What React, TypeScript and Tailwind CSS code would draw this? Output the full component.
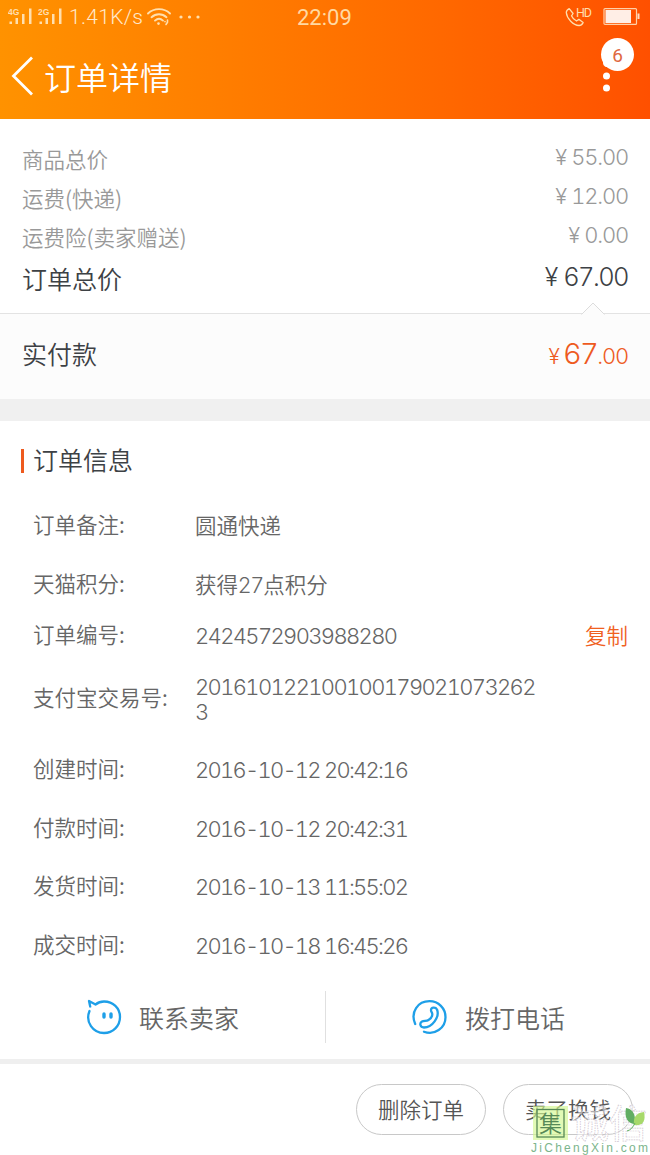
import { clsx } from "clsx";

interface OrderField {
  label: string;
  value: string;
  height: string;
  kind?: "number" | "date";
  copyable?: boolean;
}

const fees = [
  { label: "商品总价", amount: "55.00" },
  { label: "运费(快递)", amount: "12.00" },
  { label: "运费险(卖家赠送)", amount: "0.00" },
];

const fields: OrderField[] = [
  { label: "订单备注:", value: "圆通快递", height: "h-[59px]" },
  { label: "天猫积分:", value: "获得27点积分", height: "h-[58px]" },
  { label: "订单编号:", value: "2424572903988280", height: "h-11", kind: "number", copyable: true },
  { label: "支付宝交易号:", value: "2016101221001001790210732623", height: "h-[83px]", kind: "number" },
  { label: "创建时间:", value: "2016-10-12 20:42:16", height: "h-[59px]", kind: "date" },
  { label: "付款时间:", value: "2016-10-12 20:42:31", height: "h-[58px]", kind: "date" },
  { label: "发货时间:", value: "2016-10-13 11:55:02", height: "h-[59px]", kind: "date" },
  { label: "成交时间:", value: "2016-10-18 16:45:26", height: "h-[59px]", kind: "date" },
];

function Signal({ label }: { label: string }) {
  return (
    <svg width="26" height="18" viewBox="0 0 26 18" fill="#ffdfae">
      <text x="0" y="7" fontSize="8.5" fontWeight="700" fontFamily="Liberation Sans, sans-serif">
        {label}
      </text>
      <rect x="1.5" y="13.5" width="2.5" height="2.5" />
      <rect x="7.5" y="10" width="2.5" height="6" />
      <rect x="14" y="6" width="2.5" height="10" />
      <rect x="21" y="0.5" width="2.5" height="15.5" />
    </svg>
  );
}

function WifiIcon() {
  return (
    <svg width="24" height="18" viewBox="0 0 24 18" fill="none" stroke="#ffdfae" strokeWidth="1.9" strokeLinecap="round">
      <path d="M1 5.5C7-.3 17-.3 23 5.5" />
      <path d="M4.5 9.2C8.8 5.2 15.2 5.2 19.5 9.2" />
      <path d="M8 12.6C10.4 10.4 13.6 10.4 16 12.6" />
      <circle cx="11.5" cy="15.6" r="1.3" fill="#ffdfae" stroke="none" />
      <path d="M18 13.5v.2M20.5 12v2.3L19 16.5" strokeWidth="1.6" />
    </svg>
  );
}

function StatusBar() {
  return (
    <div className="flex h-[33px] items-center font-[Roboto,sans-serif] font-normal text-[#ffd9a3]">
      <div className="flex w-[297px] items-center pl-2">
        <Signal label="4G" />
        <span className="w-1" />
        <Signal label="2G" />
        <span className="ml-[5px] w-[75px] pt-0.5 text-[21px] leading-none font-light tracking-[0.3px] whitespace-nowrap text-[#ffe9cb]">
          1.41K/s
        </span>
        <span className="ml-[3px]">
          <WifiIcon />
        </span>
        <svg className="ml-2" width="22" height="4" fill="#ffdfae">
          <circle cx="2" cy="2" r="1.6" />
          <circle cx="10.5" cy="2" r="1.6" />
          <circle cx="19" cy="2" r="1.6" />
        </svg>
      </div>
      <span className="flex-1 pt-[3px] text-[22px] leading-none">22:09</span>
      <div className="flex items-center pr-[10px]">
        <svg width="30" height="22" viewBox="0 0 30 22" fill="none" stroke="#ffdfae" strokeWidth="1.3" strokeLinejoin="round">
          <path d="M5.2 2.6C4 3.2 2.3 4.8 2.3 6.5c.5 6 7 12.8 12.8 13 1.8 0 3.4-1.7 4-2.9l-4.2-3.3-2.4 1.7c-2-.9-4.2-3.2-5-5.2l1.6-2.3z" />
          <text x="12" y="10.5" fontSize="12.5" fill="#ffdfae" stroke="none" textLength="16" fontFamily="Roboto, sans-serif">
            HD
          </text>
        </svg>
        <svg className="ml-[9px]" width="37" height="17" viewBox="0 0 37 17">
          <rect x="1" y="0.6" width="32.5" height="15.8" rx="1" fill="none" stroke="#ffd0a8" strokeWidth="1.2" />
          <rect x="2.5" y="2" width="25.5" height="13" fill="#ffeee6" />
          <rect x="34.5" y="5.5" width="2" height="5.5" fill="#ffdcc2" />
        </svg>
      </div>
    </div>
  );
}

function Header() {
  return (
    <header className="h-[119px] bg-linear-to-r from-[#ff9200] to-[#ff5000]">
      <StatusBar />
      <div className="flex h-[86px] justify-between text-white">
        <div className="flex h-[86px] items-center pl-[11px]">
          <svg width="24" height="40" viewBox="0 0 24 40" fill="none" stroke="#fff" strokeWidth="2.8">
            <path d="M21 1.5 2.5 20 21 38.5" />
          </svg>
          <h1 className="ml-[9px] text-[32px] leading-none font-[350]">订单详情</h1>
        </div>
        <div className="pt-1 pr-4">
          <svg width="34" height="58" viewBox="0 0 34 58" fill="#fff">
            <circle cx="17.5" cy="17.5" r="16.5" />
            <path d="M3 21v5a4 4 0 0 0 6 3.5z" />
            <circle cx="6.5" cy="39" r="3.5" />
            <circle cx="6.5" cy="51" r="3.5" />
            <text x="17.5" y="25" fontSize="19" fontWeight="400" fill="#e0683f" textAnchor="middle" fontFamily="Roboto, sans-serif">
              6
            </text>
          </svg>
        </div>
      </div>
    </header>
  );
}

function PriceSummary() {
  return (
    <section className="h-[194px] px-[22px] pt-5">
      {fees.map((fee) => (
        <div key={fee.label} className="flex h-[39px] items-center justify-between text-[#999]">
          <span className="text-[21.5px] leading-none">{fee.label}</span>
          <span className="flex items-baseline pb-1 font-[Inter,sans-serif] leading-none tabular-nums">
            <span className="mr-1 text-[22px]">¥</span>
            <span className="text-[22px] tracking-[-1.2px]">{fee.amount}</span>
          </span>
        </div>
      ))}
      <div className="flex h-[43px] items-center justify-between text-[#3d4145]">
        <span className="pt-px text-[25px] leading-none">订单总价</span>
        <span className="flex items-baseline pb-px font-[Inter,sans-serif] leading-none tabular-nums">
          <span className="mr-[5px] text-[25px]">¥</span>
          <span className="text-[25.5px] tracking-[-1.6px]">67.00</span>
        </span>
      </div>
    </section>
  );
}

function PaidTotal() {
  return (
    <section className="relative flex h-[86px] items-center justify-between border-t border-[#e3e3e3] bg-[#fcfcfc] px-[22px]">
      <svg className="absolute -top-3 right-[45px]" width="24" height="13" viewBox="0 0 24 13">
        <path d="M0 13 12 1l12 12z" fill="#fcfcfc" />
        <path d="M.5 12.5 12 1l11.5 11.5" fill="none" stroke="#dcdcdc" />
      </svg>
      <span className="pb-1.5 text-[25px] leading-none text-[#3d4145]">实付款</span>
      <span className="flex items-baseline pb-[7px] font-[Inter,sans-serif] leading-none text-[#ee5a1e] tabular-nums">
        <span className="mr-[3px] text-[21px]">¥</span>
        <span className="text-[29px] tracking-[-1.6px]">67</span>
        <span className="text-[22px] tracking-[-1.2px]">.00</span>
      </span>
    </section>
  );
}

function OrderInfo() {
  return (
    <section className="pt-[27px]">
      <div className="flex h-[26px] items-center pl-[21px]">
        <span className="h-6 w-[3px] bg-[#ee5a1e]" />
        <h2 className="ml-[9px] pb-[3px] text-[25px] leading-none font-[350] text-[#3d4145]">订单信息</h2>
      </div>
      <dl className="pt-[22px] text-[#666]">
        {fields.map((field) => (
          <div key={field.label} className={clsx("flex items-center pr-[22px] pl-[33px]", field.height)}>
            <dt className="w-[162px] shrink-0 pb-[3px] text-[21.5px] leading-none">{field.label}</dt>
            <dd
              className={clsx(
                "w-[346px] leading-[25px] break-all",
                field.kind
                  ? "pt-0.5 font-[Inter,sans-serif] text-[22px] tabular-nums"
                  : "pt-0.5 font-[Inter,'Noto_Sans_CJK_SC',sans-serif] text-[21.5px]",
                field.kind === "number" && "tracking-[-1.65px]",
                field.kind === "date" && "tracking-[-1.75px]",
              )}
            >
              {field.value}
            </dd>
            {field.copyable && (
              <button className="ml-auto text-[21.5px] leading-none text-[#f0611f]">复制</button>
            )}
          </div>
        ))}
      </dl>
    </section>
  );
}

function ContactBar() {
  return (
    <div className="flex h-[89px] items-center border-b-[5px] border-[#efefef] text-[#666]">
      <button className="flex w-[325px] items-center pl-[86px]">
        <svg width="36" height="36" viewBox="0 0 36 36" fill="none" stroke="#1e9fe8" strokeWidth="2.3" strokeLinecap="round" strokeLinejoin="round">
          <path d="M3.5 12C-1 23 7 34 18 34c9 0 16-7 16-16S27 2.5 18 2.5c-3.5 0-6 1-8.5 3L3 2l1.2 5.5" />
          <path d="M18 15v3M25 15v3" strokeWidth="3.4" />
        </svg>
        <span className="ml-[17px] text-[25px] leading-none">联系卖家</span>
      </button>
      <span className="h-[52px] w-px bg-[#e0e0e0]" />
      <button className="flex flex-1 items-center pl-[86px]">
        <svg width="36" height="36" viewBox="0 0 36 36" fill="none" stroke="#1e9fe8" strokeWidth="2.3" strokeLinecap="round" strokeLinejoin="round">
          <path d="M3.2 25C-2 13 6 2.2 17.5 2.2c9 0 16 7 16 16 0 11-11 18.5-21.5 14.5" />
          <path d="M19 11c.2-2.8 4.5-3.2 6-.5 3 7.5-5 18-13 18-4 0-4.8-4.5-2-6 2-1 4.5-.3 6.5-1.5 2.7-1.7 4-3.5 3.8-6-.1-1.6-1.4-2.3-1.3-4z" />
        </svg>
        <span className="ml-[17px] text-[25px] leading-none">拨打电话</span>
      </button>
    </div>
  );
}

function Watermark() {
  return (
    <svg className="absolute right-0 bottom-0" width="122" height="60" viewBox="0 -10 122 60">
      <rect x="5" y="1" width="35" height="34" fill="#d3f78f" opacity="0.65" />
      <rect x="9" y="4.5" width="27" height="27.5" fill="none" stroke="#578957" strokeWidth="1.3" />
      <text x="11" y="27" fontSize="23" fill="#578957" fontFamily="Noto Sans CJK SC, sans-serif">
        集
      </text>
      <text x="43" y="32" fontSize="38" fill="#fff" fillOpacity="0.5" stroke="#ccc0cc" strokeWidth="0.7" strokeDasharray="1.5 1" fontWeight="500" textLength="76" fontFamily="Noto Sans CJK SC, sans-serif">
        诚信
      </text>
      <path d="M98 3c6 1 9 5 9 12l-1 4c-6-1-10-6-8-16z" fill="#61ad62" />
      <path d="M106 20c-1-8 2-12 10-13 2 9-1 14-10 13z" fill="#a7d96b" />
      <path d="M107 18c-2 4-4 7-8 8" stroke="#61ad62" fill="none" />
      <text x="3" y="47" fontSize="12" textLength="117" fill="#7cb58c" fontWeight="400" fontFamily="Liberation Sans, sans-serif">
        JiChengXin.com
      </text>
    </svg>
  );
}

export default function App() {
  return (
    <main className="relative h-[1155px] w-[650px] overflow-hidden bg-white font-['Noto_Sans_CJK_SC',sans-serif] font-[350]">
      <Header />
      <PriceSummary />
      <PaidTotal />
      <div className="h-[22px] bg-[#f0f0f0]" />
      <OrderInfo />
      <ContactBar />
      <footer className="flex justify-end gap-[17px] pt-5 pr-[17px] text-[21.5px] text-[#555]">
        <button className="h-[51px] w-[130px] rounded-full border border-[#c8c8c8] pb-px leading-none">删除订单</button>
        <button className="h-[51px] w-[130px] rounded-full border border-[#c8c8c8] pb-px leading-none">卖了换钱</button>
      </footer>
      <Watermark />
    </main>
  );
}
